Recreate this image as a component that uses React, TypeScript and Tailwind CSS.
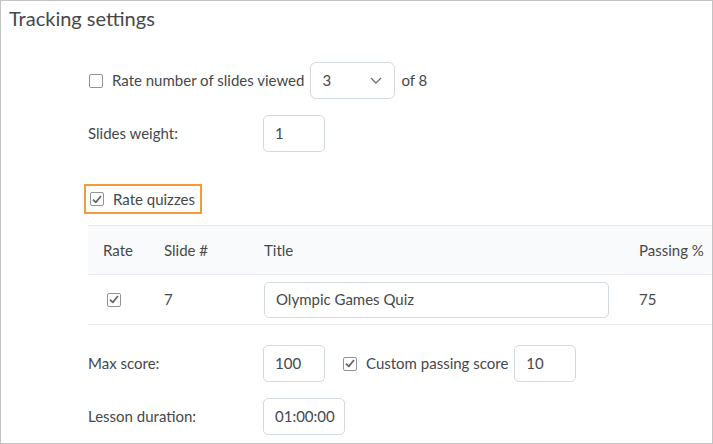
const Check = ({ checked }: { checked?: boolean }) => (
  <span className="flex h-[14px] w-[14px] shrink-0 items-center justify-center rounded-[2px] border border-[#8f9498] bg-white">
    {checked && (
      <svg width="10" height="9" viewBox="0 0 10 9" fill="none">
        <path d="M1 4.6 L3.8 7.4 L9 1" stroke="#66696c" strokeWidth="1.8" strokeLinejoin="round" />
      </svg>
    )}
  </span>
);

const Field = ({ value, w }: { value: string; w: string }) => (
  <div className={`flex h-[37px] ${w} items-center rounded-[5px] border border-[#d3d9e3] px-[11px]`}>{value}</div>
);

export default function App() {
  return (
    <div className="h-[444px] w-[713px] overflow-hidden border border-[#c3c3c3] bg-white font-['Lato',sans-serif] text-[15px] text-[#45484b]">
      <h1 className="pl-[8px] pt-[3px] text-[20px] leading-[28px]">Tracking settings</h1>

      <div className="pl-[87px] pt-[30px]">
        <div className="flex items-center">
          <label className="flex items-center gap-[9px] pl-[1px]">
            <Check />
            <span>Rate number of slides viewed</span>
          </label>
          <div className="ml-[6px] flex h-[37px] w-[85px] items-center justify-between rounded-[6px] border border-[#d3d9e3] pl-[11px] pr-[12px]">
            <span>3</span>
            <svg width="12" height="7" viewBox="0 0 12 7" fill="none">
              <path d="M1 1 L6 6 L11 1" stroke="#6e7376" strokeWidth="1.4" />
            </svg>
          </div>
          <span className="ml-[6px]">of 8</span>
        </div>

        <div className="mt-[16px] flex items-center">
          <span className="w-[175px]">Slides weight:</span>
          <Field value="1" w="w-[62px]" />
        </div>

        <div className="mt-[32px] flex h-[30px] w-[118px] -translate-x-[4px] items-center gap-[9px] border-2 border-[#f39a3e] pl-[4px]">
          <Check checked />
          <span>Rate quizzes</span>
        </div>

        <div className="mt-[11px] border-t border-[#e6e9ed]">
          <div className="grid h-[49px] grid-cols-[61px_100px_375px_1fr] items-center border-b border-[#e6e9ed] bg-[#f9fafb]">
            <span className="pl-[15px]">Rate</span>
            <span className="pl-[15px]">Slide #</span>
            <span className="pl-[15px]">Title</span>
            <span className="whitespace-nowrap pl-[15px]">Passing %</span>
          </div>
          <div className="grid h-[50px] grid-cols-[61px_100px_375px_1fr] items-center border-b border-[#e6e9ed]">
            <span className="pl-[19px]">
              <Check checked />
            </span>
            <span className="pl-[15px]">7</span>
            <span className="pl-[15px] pr-[15px]">
              <div className="flex h-[36px] items-center rounded-[5px] border border-[#d3d9e3] px-[11px]">
                Olympic Games Quiz
              </div>
            </span>
            <span className="pl-[15px]">75</span>
          </div>
        </div>

        <div className="mt-[20px] flex items-center">
          <span className="w-[175px]">Max score:</span>
          <Field value="100" w="w-[62px]" />
          <label className="ml-[18px] flex items-center gap-[9px]">
            <Check checked />
            <span>Custom passing score</span>
          </label>
          <div className="ml-[6px]">
            <Field value="10" w="w-[62px]" />
          </div>
        </div>

        <div className="mt-[16px] flex items-center">
          <span className="w-[175px]">Lesson duration:</span>
          <Field value="01:00:00" w="w-[82px]" />
        </div>
      </div>
    </div>
  );
}
